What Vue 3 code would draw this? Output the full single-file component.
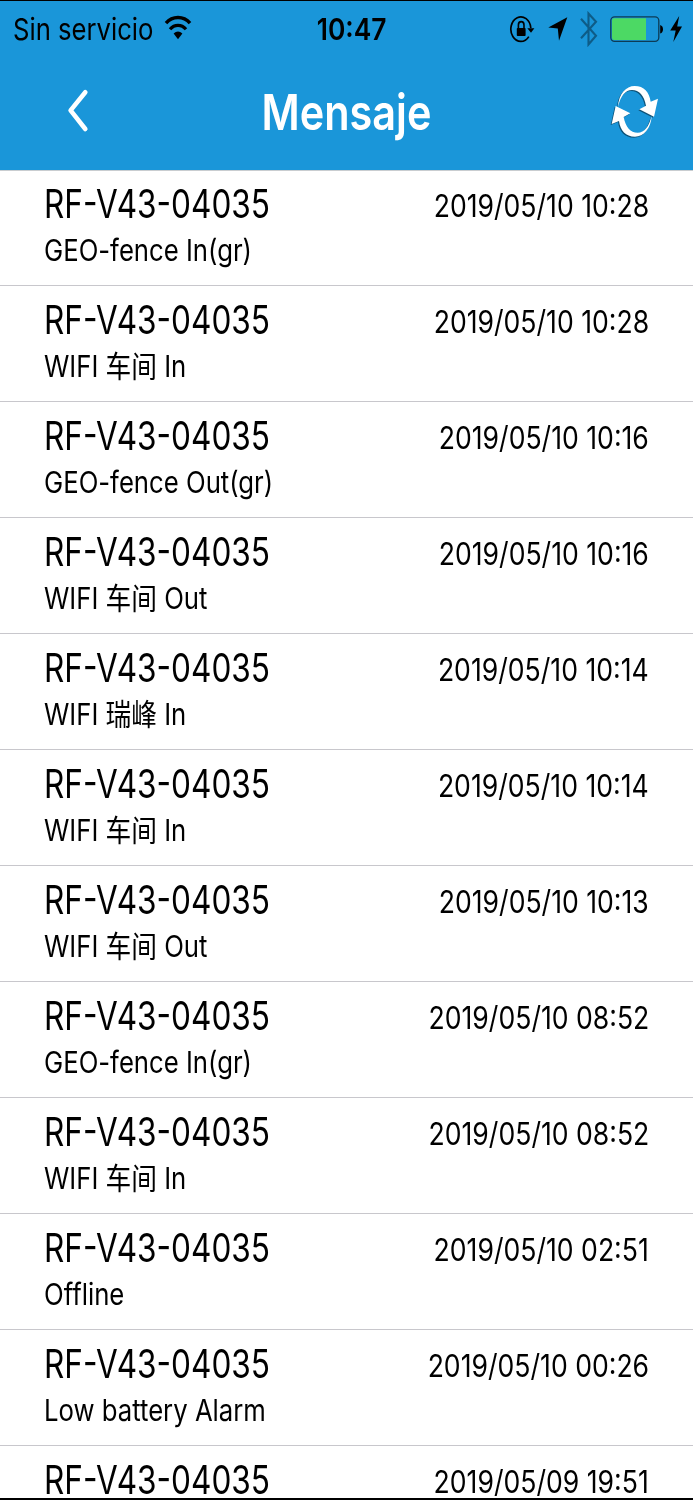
<script setup>
import { ref } from 'vue'

const messages = ref([
  { device: 'RF-V43-04035', text: 'GEO-fence In(gr)', time: '2019/05/10 10:28' },
  { device: 'RF-V43-04035', text: 'WIFI 车间 In', time: '2019/05/10 10:28' },
  { device: 'RF-V43-04035', text: 'GEO-fence Out(gr)', time: '2019/05/10 10:16' },
  { device: 'RF-V43-04035', text: 'WIFI 车间 Out', time: '2019/05/10 10:16' },
  { device: 'RF-V43-04035', text: 'WIFI 瑞峰 In', time: '2019/05/10 10:14' },
  { device: 'RF-V43-04035', text: 'WIFI 车间 In', time: '2019/05/10 10:14' },
  { device: 'RF-V43-04035', text: 'WIFI 车间 Out', time: '2019/05/10 10:13' },
  { device: 'RF-V43-04035', text: 'GEO-fence In(gr)', time: '2019/05/10 08:52' },
  { device: 'RF-V43-04035', text: 'WIFI 车间 In', time: '2019/05/10 08:52' },
  { device: 'RF-V43-04035', text: 'Offline', time: '2019/05/10 02:51' },
  { device: 'RF-V43-04035', text: 'Low battery Alarm', time: '2019/05/10 00:26' },
  { device: 'RF-V43-04035', text: '', time: '2019/05/09 19:51' },
])
</script>

<template>
  <div class="screen">
    <header class="header">
      <div class="status-bar">
        <div class="status-left">
          <span class="carrier">Sin servicio</span>
          <svg class="wifi" width="28" height="26" viewBox="164 14 28 26">
            <path d="M166 23.2C172.5 15.6 183.5 15.6 190 23.2" fill="none" stroke="#000" stroke-width="3.4" />
            <path d="M170 29.2C174.5 24 181.5 24 186 29.2" fill="none" stroke="#000" stroke-width="3.2" />
            <path d="M173.6 33.6Q178 29.6 182.4 33.6L178 39.2Z" />
          </svg>
        </div>
        <span class="clock">10:47</span>
        <div class="status-right">
          <svg width="26" height="30" viewBox="509 13 26 30">
            <path d="M530.8 27A10 12.3 0 1 0 528.8 35.6" fill="none" stroke="#000" stroke-width="1.7" />
            <path d="M527.3 27.3H534.4L531 31.8Z" />
            <rect x="516.8" y="27" width="8.8" height="8" rx="0.8" />
            <path d="M518.4 27.5V24Q518.4 20.6 521.2 20.6Q524 20.6 524 24V27.5" fill="none" stroke="#000" stroke-width="1.6" />
          </svg>
          <svg class="location" width="20" height="26" viewBox="548 16 20 26">
            <path d="M567.3 17.3L548.3 27.4L557.8 28.6L559 40.8Z" />
          </svg>
          <svg class="bluetooth" width="18" height="36" viewBox="580 10 18 36">
            <path d="M581 17.8L596 34.8L588.5 43.5V12.5L596 20.8L581 37.3" fill="none" stroke="#0e5c87" stroke-width="2.1" />
          </svg>
          <svg class="battery" width="54" height="28" viewBox="610 14 54 28">
            <rect x="610.8" y="15.8" width="48" height="24.6" rx="3.8" fill="none" stroke="#0d3b55" stroke-width="1.3" />
            <path d="M614 17.2H646V39H614Q612 39 612 36.5V19.5Q612 17.2 614 17.2Z" fill="#4cd964" />
            <path d="M660.2 24Q663 25 663 28.2Q663 31.5 660.2 32.5Z" />
          </svg>
          <svg class="bolt" width="14" height="28" viewBox="669 14 14 28">
            <path d="M679.2 15L670.2 29.4H675.7L673.3 41L682 25.6H677.2Z" />
          </svg>
        </div>
      </div>

      <div class="nav-bar">
        <svg class="back" width="26" height="46" viewBox="65 89 26 46">
          <path d="M85.3 93.3L70.6 111.4L85.3 130" fill="none" stroke="#fff" stroke-width="4.6" stroke-linecap="round" stroke-linejoin="round" />
        </svg>
        <h1 class="title">Mensaje</h1>
        <svg class="refresh" width="50" height="56" viewBox="60 39 150 168">
          <path d="M84 110C86 72 108 48 134 48C162 48 178 66 182 95L204 86L192 140L148 118L168 107C162 76 148 60 126 60C106 60 92 78 84 110Z" />
          <path transform="rotate(180 134.5 124)" d="M84 110C86 72 108 48 134 48C162 48 178 66 182 95L204 86L192 140L148 118L168 107C162 76 148 60 126 60C106 60 92 78 84 110Z" />
        </svg>
      </div>
    </header>

    <ul class="list">
      <li v-for="(message, index) in messages" :key="index" class="row">
        <div class="info">
          <span class="device">{{ message.device }}</span>
          <span v-if="message.text" class="text">{{ message.text }}</span>
        </div>
        <span class="time">{{ message.time }}</span>
      </li>
    </ul>
  </div>
</template>

<style>
body {
  margin: 0;
  background: #fff;
}
</style>

<style scoped>
.screen {
  width: 693px;
  height: 1500px;
  box-sizing: border-box;
  border-top: 1px solid #000;
  border-bottom: 2px solid #000;
  overflow: hidden;
  background: #fff;
  color: #000;
  font-family: Inter, "Noto Sans CJK SC", sans-serif;
  white-space: nowrap;
}

.header {
  height: 169px;
  background: #1a96d9;
  box-shadow: 0 1px 0 #c9cdd0;
}

.status-bar {
  display: grid;
  grid-template-columns: 250px 193px 250px;
  align-items: center;
  height: 55px;
}

.status-left,
.status-right {
  display: flex;
  align-items: center;
}

.status-left {
  padding-left: 13px;
}

.carrier {
  width: 151px;
  font-size: 30px;
  line-height: 36px;
  transform: scaleX(0.855);
  transform-origin: left;
}

.wifi {
  margin-top: -3px;
}

.clock {
  justify-self: center;
  margin-left: 10px;
  font-size: 30px;
  font-weight: 600;
  line-height: 36px;
  transform: scaleX(0.88);
}

.status-right {
  padding-left: 66px;
}

.location {
  margin-left: 13px;
}

.bluetooth {
  margin-left: 12px;
}

.battery {
  margin-left: 12px;
}

.bolt {
  margin-left: 5px;
}

.nav-bar {
  display: grid;
  grid-template-columns: 91px 1fr 91px;
  align-items: center;
  height: 110px;
}

.back {
  margin-left: 65px;
}

.title {
  margin: 2px 0 0;
  color: #fff;
  font-size: 50px;
  font-weight: 600;
  line-height: 60px;
  text-align: center;
  transform: scaleX(0.828);
}

.refresh {
  margin-left: 8px;
  fill: #fff;
  filter: drop-shadow(-0.7px 1px 0.6px rgba(0, 0, 0, 0.45));
}

.list {
  margin: 0;
  padding: 0;
  list-style: none;
}

.row {
  display: flex;
  justify-content: space-between;
  box-sizing: border-box;
  height: 116px;
  padding: 16px 44px 0;
  border-bottom: 1px solid #c8c7cc;
}

.info {
  display: flex;
  flex-direction: column;
  gap: 10px;
  align-items: flex-start;
}

.device {
  font-size: 39px;
  line-height: 36px;
  transform: scaleX(0.81);
  transform-origin: left;
}

.text {
  font-size: 30px;
  line-height: 36px;
  transform: scaleX(0.857);
  transform-origin: left;
}

.time {
  margin-top: 4px;
  font-size: 31px;
  line-height: 32px;
  transform: scaleX(0.858);
  transform-origin: right;
}
</style>
